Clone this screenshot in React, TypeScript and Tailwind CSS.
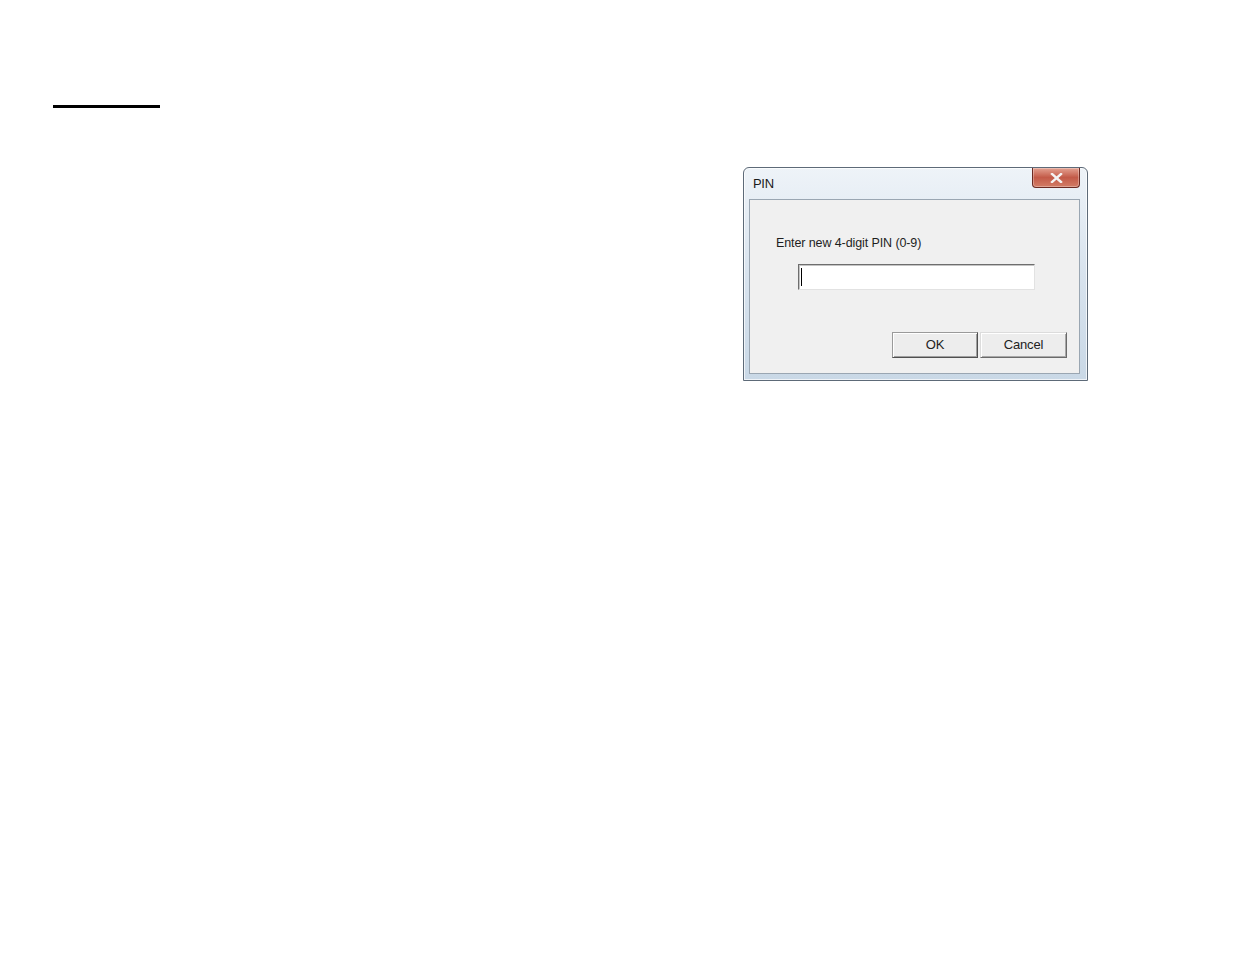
import React from 'react';

const font = { fontFamily: '"Liberation Sans", Arial, sans-serif' };

const CloseButton: React.FC = () => (
  <div className="absolute right-[7px] top-0 flex h-[20px] w-[48px] items-center justify-center rounded-b-[4px] border border-t-0 border-[#6b2a22] bg-gradient-to-b from-[#e3a191] via-[#c35a48] to-[#d27c66] shadow-[inset_0_0_0_1px_rgba(255,255,255,0.3)]">
    <svg width="13" height="10" viewBox="0 0 13 10">
      <path d="M2 1 L11 9 M11 1 L2 9" stroke="#f4f4f4" strokeWidth="2.4" strokeLinecap="square" />
    </svg>
  </div>
);

const DialogButton: React.FC<{ label: string; isDefault?: boolean; width: string }> = ({
  label,
  isDefault,
  width
}) => (
  <button
    className={`flex h-[26px] items-center justify-center border bg-[#ededed] text-[13px] tracking-[-0.2px] text-[#222] ${width} ${
      isDefault
        ? 'border-t-[#9a9a9a] border-l-[#9a9a9a] border-b-[#505050] border-r-[#505050] shadow-[inset_1px_1px_0_#ffffff,inset_-1px_-1px_0_#a0a0a0]'
        : 'border-t-[#dcdcdc] border-l-[#dcdcdc] border-b-[#6a6a6a] border-r-[#6a6a6a] shadow-[inset_1px_1px_0_#ffffff,inset_-1px_-1px_0_#a8a8a8]'
    }`}
  >
    {label}
  </button>
);

export default function App() {
  return (
    <div className="min-h-[954px] w-full bg-white" style={font}>
      <div className="pt-[105px] pl-[53px]">
        <div className="h-[3px] w-[107px] bg-black" />
      </div>

      <div className="pl-[743px] pt-[59px]">
        <div className="relative flex h-[214px] w-[345px] flex-col rounded-t-[6px] border border-[#5d6a78] bg-gradient-to-b from-[#eef3f8] via-[#d8e3ee] to-[#c9d8e6] pb-[6px] pl-[5px] pr-[7px] shadow-[inset_0_0_0_1px_rgba(255,255,255,0.7)]">
          <CloseButton />
          <div className="flex h-[31px] items-center pl-[4px] pt-[1px] text-[13px] tracking-[-0.3px] text-[#1a1a1a]">
            PIN
          </div>
          <div className="flex flex-1 flex-col border border-[#9aa6b2] bg-[#f0f0f0]">
            <div className="pl-[26px] pt-[36px] text-[12.5px] leading-[14px] tracking-[-0.1px] text-[#1e1e1e]">
              Enter new 4-digit PIN (0-9)
            </div>
            <div className="pl-[48px] pt-[14px]">
              <div className="flex h-[26px] w-[237px] items-center border border-t-[#6e6e6e] border-l-[#6e6e6e] border-b-[#e2e2e2] border-r-[#e2e2e2] bg-white pl-[2px] shadow-[inset_1px_1px_0_#c4c4c4]">
                <div className="h-[18px] w-[1px] bg-black" />
              </div>
            </div>
            <div className="flex flex-1 items-end justify-end gap-[2px] pb-[15px] pr-[12px]">
              <DialogButton label="OK" isDefault width="w-[86px]" />
              <DialogButton label="Cancel" width="w-[87px]" />
            </div>
          </div>
        </div>
      </div>
    </div>
  );
}
